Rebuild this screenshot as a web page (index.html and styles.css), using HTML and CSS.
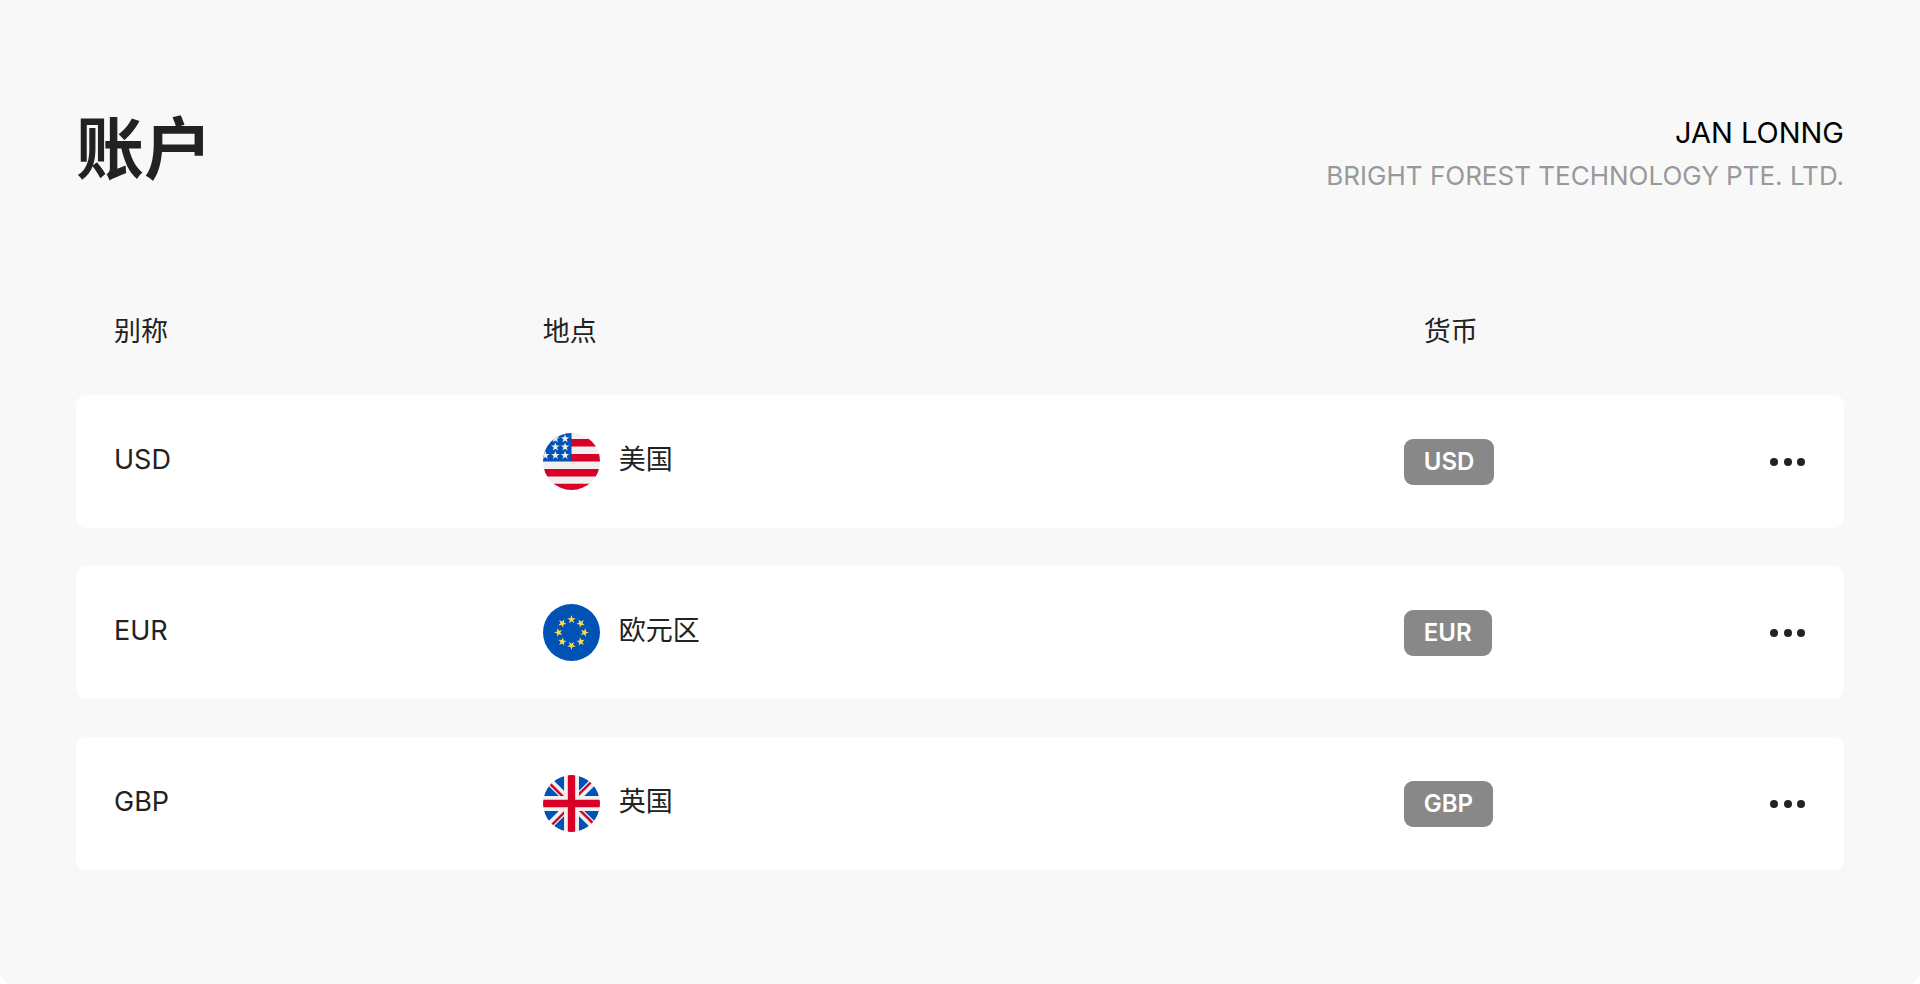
FILE: index.html
```
<!DOCTYPE html>
<html lang="zh-CN">
<head>
  <meta charset="UTF-8">
  <meta name="viewport" content="width=device-width, initial-scale=1">
  <title>账户</title>
  <link rel="stylesheet" href="styles.css">
</head>
<body>

  <svg class="defs" width="0" height="0" aria-hidden="true">
    <defs>
      <clipPath id="circle"><circle cx="256" cy="256" r="256"/></clipPath>
      <polygon id="star" points="0,-40 10,-12 38,-12 15,6 23,33 0,16 -23,33 -15,6 -38,-12 -10,-12"/>
    </defs>
  </svg>

  <main class="page">
    <header class="header">
      <h1 class="title">账户</h1>
      <div class="owner">
        <div class="owner-name">JAN LONNG</div>
        <div class="owner-company">BRIGHT FOREST TECHNOLOGY PTE. LTD.</div>
      </div>
    </header>

    <table class="accounts">
      <thead>
        <tr>
          <th class="col-name" scope="col">别称</th>
          <th class="col-place" scope="col">地点</th>
          <th class="col-currency" scope="col">货币</th>
          <td class="col-menu"></td>
        </tr>
      </thead>
      <tbody>
        <!-- USD -->
        <tr>
          <td>USD</td>
          <td>
            <div class="place">
              <svg class="flag" viewBox="0 0 512 512" aria-hidden="true">
                <g clip-path="url(#circle)">
                  <rect width="512" height="512" fill="#f0f0f0"/>
                  <path fill="#d80027" d="M245 55h267v67H245zM245 189h267v67H245zM0 323h512v67H0zM0 456h512v56H0z"/>
                  <rect width="256" height="256" fill="#0052b4"/>
                  <g fill="#f0f0f0">
                    <use href="#star" x="111" y="51"/>
                    <use href="#star" x="198" y="51"/>
                    <use href="#star" x="111" y="125"/>
                    <use href="#star" x="198" y="125"/>
                    <use href="#star" x="20" y="200"/>
                    <use href="#star" x="111" y="200"/>
                    <use href="#star" x="198" y="200"/>
                  </g>
                </g>
              </svg>
              <span>美国</span>
            </div>
          </td>
          <td><span class="badge">USD</span></td>
          <td class="actions">
            <button class="more" type="button" aria-label="USD 更多操作">
              <svg width="36" height="10" viewBox="0 0 36 10"><circle cx="4" cy="5" r="4"/><circle cx="18" cy="5" r="4"/><circle cx="31" cy="5" r="4"/></svg>
            </button>
          </td>
        </tr>
        <!-- EUR -->
        <tr>
          <td>EUR</td>
          <td>
            <div class="place">
              <svg class="flag" viewBox="0 0 512 512" aria-hidden="true">
                <circle cx="256" cy="256" r="256" fill="#0052b4"/>
                <g fill="#ffda44">
                  <use href="#star" x="256" y="139"/>
                  <use href="#star" transform="translate(339 173) rotate(45)"/>
                  <use href="#star" transform="translate(373 256) rotate(90)"/>
                  <use href="#star" transform="translate(339 339) rotate(135)"/>
                  <use href="#star" transform="translate(256 373) rotate(180)"/>
                  <use href="#star" transform="translate(173 339) rotate(225)"/>
                  <use href="#star" transform="translate(139 256) rotate(270)"/>
                  <use href="#star" transform="translate(173 173) rotate(315)"/>
                </g>
              </svg>
              <span>欧元区</span>
            </div>
          </td>
          <td><span class="badge">EUR</span></td>
          <td class="actions">
            <button class="more" type="button" aria-label="EUR 更多操作">
              <svg width="36" height="10" viewBox="0 0 36 10"><circle cx="4" cy="5" r="4"/><circle cx="18" cy="5" r="4"/><circle cx="31" cy="5" r="4"/></svg>
            </button>
          </td>
        </tr>
        <!-- GBP -->
        <tr>
          <td>GBP</td>
          <td>
            <div class="place">
              <svg class="flag" viewBox="0 0 512 512" aria-hidden="true">
                <circle cx="256" cy="256" r="256" fill="#f0f0f0"/>
                <g clip-path="url(#circle)">
                  <path fill="#0052b4" d="M53 100C33 126 18 156 9 189h133zM503 189c-9-33-24-63-44-89l-89 89zM9 323c9 33 24 63 44 89l89-89zM412 53c-26-20-56-35-89-44v133zM100 459c26 20 56 35 89 44V370zM189 9c-33 9-63 24-89 44l89 89zM323 503c33-9 63-24 89-44l-89-89zM370 323l89 89c20-26 35-56 44-89z"/>
                  <path fill="#d80027" d="M223 0h66v223h223v66H289v223h-66V289H0v-66h223z"/>
                  <path fill="#d80027" d="M323 323l114 114 15-16-98-98zM189 323 75 437l16 15 98-98zM189 189 75 75 60 91l98 98zM323 189 437 75l-16-15-98 98z"/>
                </g>
              </svg>
              <span>英国</span>
            </div>
          </td>
          <td><span class="badge">GBP</span></td>
          <td class="actions">
            <button class="more" type="button" aria-label="GBP 更多操作">
              <svg width="36" height="10" viewBox="0 0 36 10"><circle cx="4" cy="5" r="4"/><circle cx="18" cy="5" r="4"/><circle cx="31" cy="5" r="4"/></svg>
            </button>
          </td>
        </tr>
      </tbody>
    </table>
  </main>

</body>
</html>
```
FILE: styles.css
```
* {
  box-sizing: border-box;
}
body {
  margin: 0;
  background-color: #fff;
  color: #222;
  font-family: Inter, "Noto Sans CJK SC", sans-serif;
  font-size: 27px;
  line-height: 36px;
}
.defs {
  position: absolute;
}
.page {
  min-height: 100vh;
  padding: 100px 76px 76px;
  background-color: #f8f8f8;
  border-radius: 0 0 12px 12px;
}
.header {
  display: flex;
  justify-content: space-between;
  align-items: flex-end;
  margin-bottom: 78px;
}
.title {
  margin: 0;
  font-size: 68px;
  line-height: 98px;
  font-weight: bold;
}
.owner {
  text-align: right;
}
.owner-name {
  color: #000;
  font-size: 29px;
  line-height: 42px;
}
.owner-company {
  color: #999;
  font-size: 26px;
  line-height: 44px;
}

/* 账户列表 */
.accounts {
  width: 100%;
  table-layout: fixed;
  border-collapse: separate;
  border-spacing: 0 38px;
}
.accounts th {
  padding: 0 0 7px;
  font-weight: normal;
  text-align: left;
}
.accounts .col-name {
  width: 26.4%;
  padding-left: 38px;
}
.col-place {
  width: 48.7%;
}
.accounts .col-currency {
  width: 14%;
  padding-left: 20px;
}
.accounts tbody td {
  padding: 38px 0;
  background-color: #fff;
}
.accounts tbody td:first-child {
  padding-left: 38px;
  padding-bottom: 42px;
  border-radius: 10px 0 0 10px;
}
.accounts tbody td:last-child {
  padding-right: 38px;
  border-radius: 0 10px 10px 0;
}
.place {
  display: flex;
  align-items: center;
  gap: 19px;
}
.place span {
  padding-bottom: 4px;
}
.flag {
  display: block;
  width: 57px;
  height: 57px;
}
.badge {
  display: inline-block;
  padding: 5px 20px;
  border-radius: 9px;
  background-color: #888;
  color: #fff;
  font-size: 24px;
  font-weight: 600;
}
.actions {
  text-align: right;
}
.more {
  display: block;
  margin-left: auto;
  padding: 0;
  border: none;
  background: none;
  cursor: pointer;
}
.more svg {
  display: block;
  fill: #222;
}
```
